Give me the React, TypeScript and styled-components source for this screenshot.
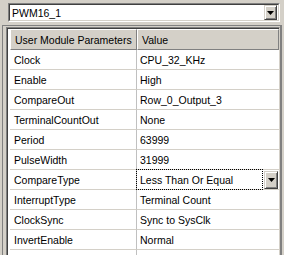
import React from "react";
import styled, { createGlobalStyle } from "styled-components";

const GlobalStyle = createGlobalStyle`
  html, body {
    margin: 0;
    padding: 0;
    background: #d4d0c8;
  }
  body {
    font-family: "Liberation Sans", Arial, sans-serif;
    font-size: 10.5px;
    color: #000;
    white-space: nowrap;
  }
`;

interface IParam {
  name: string;
  value: string;
  combo?: boolean;
}

const params: IParam[] = [
  { name: "Clock", value: "CPU_32_KHz" },
  { name: "Enable", value: "High" },
  { name: "CompareOut", value: "Row_0_Output_3" },
  { name: "TerminalCountOut", value: "None" },
  { name: "Period", value: "63999" },
  { name: "PulseWidth", value: "31999" },
  { name: "CompareType", value: "Less Than Or Equal", combo: true },
  { name: "InterruptType", value: "Terminal Count" },
  { name: "ClockSync", value: "Sync to SysClk" },
  { name: "InvertEnable", value: "Normal" },
  { name: "", value: "" },
];

const Arrow = () => (
  <svg width="7" height="4" viewBox="0 0 7 4">
    <path d="M0 0h7L3.5 4z" fill="#000" />
  </svg>
);

export default function App() {
  return (
    <Page>
      <GlobalStyle />
      <Top>
        <Combo>
          <ComboInner>
            <ComboText>PWM16_1</ComboText>
            <DropButton>
              <Arrow />
            </DropButton>
          </ComboInner>
        </Combo>
      </Top>
      <Frame>
        <Grid>
          <HeaderRow>
            <HeaderCell $w={127}>User Module Parameters</HeaderCell>
            <HeaderCell $grow>Value</HeaderCell>
          </HeaderRow>
          {params.map((p, i) => (
            <Row key={i}>
              <NameCell>{p.name}</NameCell>
              {p.combo ? (
                <ValueCell>
                  <FocusBox>{p.value}</FocusBox>
                  <CellButton>
                    <Arrow />
                  </CellButton>
                </ValueCell>
              ) : (
                <ValueCell>
                  <ValueText>{p.value}</ValueText>
                </ValueCell>
              )}
            </Row>
          ))}
        </Grid>
      </Frame>
    </Page>
  );
}

const Page = styled.div`
  width: 284px;
  height: 255px;
  overflow: hidden;
  background: #d4d0c8;
`;

const Top = styled.div`
  padding: 3px 4px 0 8px;
  display: flex;
`;

const Combo = styled.div`
  flex: 1;
  height: 17px;
  border: 1px solid;
  border-color: #808080 #fff #fff #808080;
`;

const ComboInner = styled.div`
  height: 100%;
  box-sizing: border-box;
  border: 1px solid;
  border-color: #404040 #d4d0c8 #d4d0c8 #404040;
  background: #fff;
  display: flex;
  align-items: center;
  padding-right: 1px;
`;

const ComboText = styled.div`
  flex: 1;
  padding-left: 2px;
`;

const RaisedButton = styled.div`
  box-sizing: border-box;
  background: #d4d0c8;
  border: 1px solid;
  border-color: #d4d0c8 #404040 #404040 #d4d0c8;
  box-shadow: inset 1px 1px 0 #fff, inset -1px -1px 0 #808080;
  display: flex;
  align-items: center;
  justify-content: center;
`;

const DropButton = styled(RaisedButton)`
  width: 13px;
  height: 15px;
`;

const Frame = styled.div`
  margin: 3px 2px 0 2px;
  height: 240px;
  border: 1px solid #808080;
  border-right-width: 2px;
  border-bottom: none;
  padding: 1px 0 0 3px;
`;

const Grid = styled.div`
  height: 100%;
  border-left: 1px solid #808080;
  border-top: 1px solid #808080;
  border-right: 1px solid #d4d0c8;
  box-shadow: inset 1px 1px 0 #404040;
  padding: 1px 0 0 1px;
  background: #fff;
`;

const HeaderRow = styled.div`
  display: flex;
  height: 21px;
  background: #d4d0c8;
  margin-left: 2px;
`;

const HeaderCell = styled.div<{ $w?: number; $grow?: boolean }>`
  box-sizing: border-box;
  ${(p) => (p.$w ? `width: ${p.$w}px;` : "")}
  ${(p) => (p.$grow ? "flex: 1;" : "")}
  border-top: 1px solid #fff;
  border-left: 1px solid #fff;
  border-right: 1px solid #808080;
  border-bottom: 1px solid #808080;
  padding-left: 4px;
  display: flex;
  align-items: center;
`;

const Row = styled.div`
  display: flex;
  height: 20px;
`;

const NameCell = styled.div`
  box-sizing: border-box;
  width: 127px;
  margin-left: 2px;
  border-bottom: 1px solid #d4d0c8;
  border-right: 1px solid #c0c0c0;
  padding-left: 4px;
  display: flex;
  align-items: center;
`;

const ValueCell = styled.div`
  flex: 1;
  box-sizing: border-box;
  border-bottom: 1px solid #d4d0c8;
  display: flex;
  align-items: center;
`;

const ValueText = styled.div`
  padding-left: 3px;
`;

const FocusBox = styled.div`
  box-sizing: border-box;
  width: 127px;
  height: 21px;
  margin: -1px 0 0 -1px;
  align-self: flex-start;
  border: 1px dotted #000;
  padding-left: 3px;
  display: flex;
  align-items: center;
`;

const CellButton = styled(RaisedButton)`
  width: 14px;
  height: 18px;
  margin: 1px 0 0 1px;
  align-self: flex-start;
`;
